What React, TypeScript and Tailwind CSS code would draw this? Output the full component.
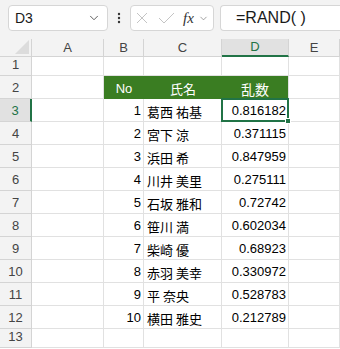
import { ChevronDown } from "lucide-react";

const people = [
  { no: 1, name: "葛西 祐基", val: "0.816182" },
  { no: 2, name: "宮下 涼", val: "0.371115" },
  { no: 3, name: "浜田 希", val: "0.847959" },
  { no: 4, name: "川井 美里", val: "0.275111" },
  { no: 5, name: "石坂 雅和", val: "0.72742" },
  { no: 6, name: "笹川 満", val: "0.602034" },
  { no: 7, name: "柴崎 優", val: "0.68923" },
  { no: 8, name: "赤羽 美幸", val: "0.330972" },
  { no: 9, name: "平 奈央", val: "0.528783" },
  { no: 10, name: "横田 雅史", val: "0.212789" },
];

const cols = ["A", "B", "C", "D", "E"];

function FormulaBar() {
  return (
    <div className="flex h-[39px] items-start bg-[#f3f3f3] pt-[5px]">
      <div className="ml-[8px] flex h-[26px] w-[100px] items-center justify-between rounded-[4px] border border-[#d6d6d6] bg-white pl-[6px] pr-[6px]">
        <span className="text-[14px] text-[#1a1a1a]">D3</span>
        <ChevronDown size={14} strokeWidth={1.6} className="text-[#555]" />
      </div>
      <svg width="22" height="26" viewBox="0 0 22 26" className="shrink-0">
        <circle cx="11" cy="9" r="1.2" fill="#333" />
        <circle cx="11" cy="13" r="1.2" fill="#333" />
        <circle cx="11" cy="17" r="1.2" fill="#333" />
      </svg>
      <div className="flex h-[26px] w-[84px] items-center rounded-[4px] border border-[#d6d6d6] bg-white pl-[5px]">
        <svg width="12" height="12" viewBox="0 0 12 12">
          <path d="M1 1 L11 11 M11 1 L1 11" stroke="#c4c4c4" strokeWidth="1" fill="none" />
        </svg>
        <svg width="17" height="12" viewBox="0 0 17 12" className="ml-[10px]">
          <path d="M1 6 L6 11 L16 1" stroke="#c4c4c4" strokeWidth="1" fill="none" />
        </svg>
        <span className="ml-[8px] text-[15px] italic leading-none text-[#333]" style={{ fontFamily: '"Liberation Serif", serif' }}>
          fx
        </span>
        <ChevronDown size={11} strokeWidth={1.5} className="ml-[4px] text-[#777]" />
      </div>
      <div className="ml-[6px] flex h-[26px] flex-1 items-center rounded-l-[4px] border border-r-0 border-[#d6d6d6] bg-white pl-[15px]">
        <span className="text-[16px] text-[#1a1a1a]">=RAND( )</span>
      </div>
    </div>
  );
}

function Grid() {
  const rows = Array.from({ length: 13 }, (_, i) => i + 1);
  const cell = "border-r border-b border-[#e1e1e1]";
  return (
    <div className="grid grid-cols-[32px_72px_40px_78px_67px_1fr] grid-rows-[18px_19px_repeat(11,23px)_19px] bg-white">
      {/* corner */}
      <div className="relative border-r border-b border-[#d4d4d4] bg-[#f3f3f3]">
        <svg width="14" height="14" viewBox="0 0 14 14" className="absolute bottom-[2px] right-[2px]">
          <path d="M14 0 L14 14 L0 14 Z" fill="#dcdcdc" />
        </svg>
      </div>
      {cols.map((c) =>
        c === "D" ? (
          <div key={c} className="flex items-center justify-center border-r border-b-2 border-r-[#d4d4d4] border-b-[#217346] bg-[#e1e1e1] text-[13px] text-[#217346]">
            {c}
          </div>
        ) : (
          <div key={c} className="flex items-center justify-center border-r border-b border-[#d4d4d4] bg-[#f3f3f3] text-[13px] text-[#444]">
            {c}
          </div>
        )
      )}
      {rows.map((r) => {
        const p = r >= 3 && r <= 12 ? people[r - 3] : null;
        const sel = r === 3;
        return [
          <div
            key={`h${r}`}
            className={
              sel
                ? "flex items-end justify-center border-r-2 border-b border-r-[#217346] border-b-[#d4d4d4] bg-[#e1e1e1] pb-[2px] text-[13px] leading-[16px] text-[#217346]"
                : "flex items-end justify-center border-r border-b border-[#d4d4d4] bg-[#f3f3f3] pb-[2px] text-[13px] leading-[16px] text-[#444]"
            }
          >
            {r}
          </div>,
          <div key={`a${r}`} className={cell} />,
          r === 2 ? (
            <div key={`b${r}`} className="flex items-end justify-center bg-[#3a7d22] pb-[2px] text-[13px] leading-[16px] text-white">
              No
            </div>
          ) : (
            <div key={`b${r}`} className={`${cell} flex items-end justify-end pb-[2px] pr-[2px] text-[13px] leading-[16px] text-black`}>
              {p?.no}
            </div>
          ),
          r === 2 ? (
            <div key={`c${r}`} className="flex items-end justify-center bg-[#3a7d22] pb-[2px] text-[13px] leading-[16px] text-white" style={{ fontFamily: '"Noto Sans CJK JP", sans-serif' }}>
              氏名
            </div>
          ) : (
            <div key={`c${r}`} className={`${cell} flex items-end pb-[1px] pl-[3px] text-[13px] leading-[17px] text-black`} style={{ fontFamily: '"Noto Sans CJK JP", sans-serif' }}>
              {p?.name}
            </div>
          ),
          r === 2 ? (
            <div key={`d${r}`} className="flex items-end justify-center border-r border-[#e1e1e1] bg-[#3a7d22] pb-[1px] text-[14px] leading-[17px] text-white" style={{ fontFamily: '"Noto Sans CJK JP", sans-serif' }}>
              乱数
            </div>
          ) : sel ? (
            <div key={`d${r}`} className="relative -ml-[1px] -mt-[1px] flex items-end justify-end border-2 border-[#217346] pb-[1px] pr-[1px] text-[13px] leading-[16px] text-black">
              {p?.val}
              <span className="absolute -bottom-[4px] -right-[4px] h-[6px] w-[6px] border border-white bg-[#217346]" />
            </div>
          ) : (
            <div key={`d${r}`} className={`${cell} flex items-end justify-end pb-[2px] pr-[2px] text-[13px] leading-[16px] text-black`}>
              {p?.val}
            </div>
          ),
          <div key={`e${r}`} className={cell} />,
        ];
      })}
    </div>
  );
}

export default function App() {
  return (
    <div className="h-[349px] w-[340px] overflow-hidden bg-white" style={{ fontFamily: '"Liberation Sans", Arial, sans-serif' }}>
      <FormulaBar />
      <Grid />
    </div>
  );
}
